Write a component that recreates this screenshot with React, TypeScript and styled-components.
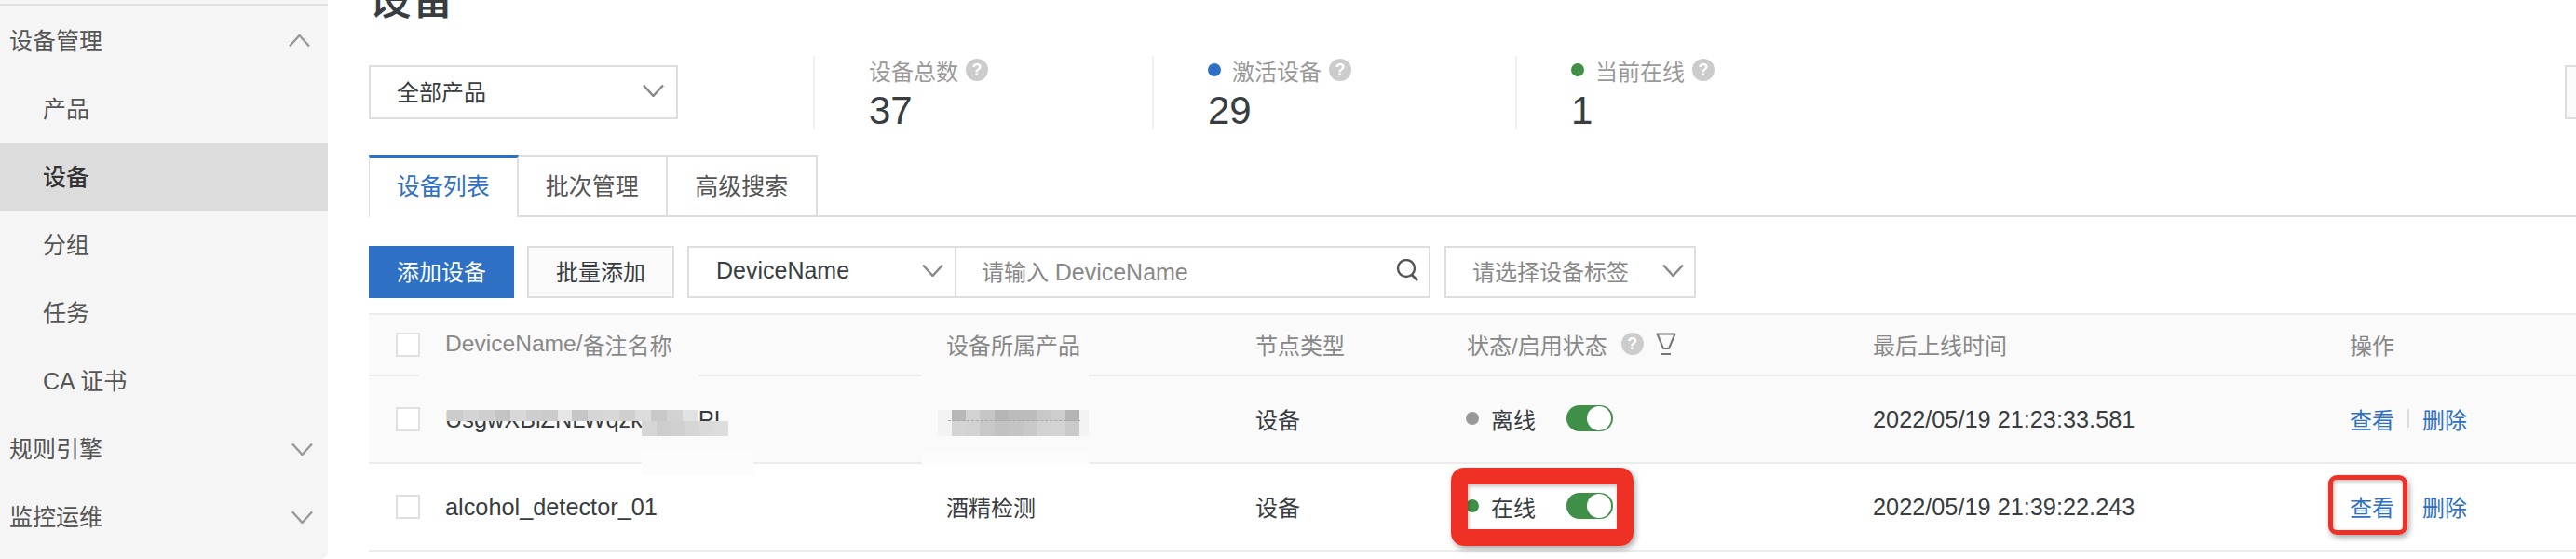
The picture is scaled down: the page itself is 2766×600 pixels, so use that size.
import React from 'react';
import styled, { createGlobalStyle } from 'styled-components';

const GlobalStyle = createGlobalStyle`
  html, body {
    margin: 0;
    padding: 0;
    background: #fff;
  }
  body {
    font-family: "Liberation Sans", "Noto Sans CJK SC", sans-serif;
    color: #373d41;
    overflow: hidden;
  }
`

const Page = styled.div`
  width: 2766px;
  height: 600px;
  display: flex;
  overflow: hidden;
  background: #fff;
`

const Sidebar = styled.nav`
  width: 352px;
  height: 600px;
  flex-shrink: 0;
  box-sizing: border-box;
  padding-top: 8px;
  background: #f5f5f5;
  border-bottom-right-radius: 8px;
  position: relative;

  &::before {
    content: '';
    position: absolute;
    top: 4px;
    left: 0;
    right: 0;
    height: 2px;
    background: #e2e2e2;
  }
`

const MenuRow = styled.div<{ $sub?: boolean; $active?: boolean }>`
  height: 73px;
  box-sizing: border-box;
  padding-left: ${p => (p.$sub ? '46px' : '10px')};
  padding-right: 16px;
  display: flex;
  align-items: center;
  justify-content: space-between;
  font-size: 25px;
  color: ${p => (p.$active ? '#333' : '#555')};
  font-weight: ${p => (p.$active ? 500 : 400)};
  background: ${p => (p.$active ? '#dcdcdc' : 'transparent')};
`

const MenuLabel = styled.span`
  padding-bottom: 6px;
`

const UpSlot = styled.span`
  display: flex;
  margin-right: 3px;
  padding-bottom: 3px;
`

const Main = styled.main`
  flex: 1;
  min-width: 0;
  box-sizing: border-box;
  padding-left: 44px;
  overflow: hidden;
`

const Title = styled.h1`
  margin: -24px 0 38px;
  height: 46px;
  line-height: 46px;
  font-size: 46px;
  font-weight: 500;
  color: #373d41;
`

const StatsRow = styled.section`
  display: flex;
  align-items: center;
  height: 78px;
`

const SelectBox = styled.div<{ $w: number; $muted?: boolean; $h?: number; $pr?: number }>`
  width: ${p => p.$w}px;
  height: ${p => p.$h ?? 58}px;
  flex-shrink: 0;
  box-sizing: border-box;
  border: 2px solid #dedede;
  background: #fff;
  padding: 0 ${p => p.$pr ?? 13}px 4px 28px;
  display: flex;
  align-items: center;
  justify-content: space-between;
  font-size: 24px;
  color: ${p => (p.$muted ? '#888' : '#373d41')};
`

const Stat = styled.div<{ $w: number; $ml?: number }>`
  width: ${p => p.$w}px;
  height: 78px;
  flex-shrink: 0;
  box-sizing: border-box;
  margin-left: ${p => p.$ml ?? 0}px;
  padding-left: 58px;
  border-left: 2px solid #f0f0f0;
`

const StatLabel = styled.div`
  display: flex;
  align-items: center;
  height: 30px;
  font-size: 24px;
  color: #999;
`

const StatValue = styled.div`
  margin-top: 5px;
  font-size: 42px;
  line-height: 48px;
  color: #373d41;
`

const Dot = styled.span<{ $color: string }>`
  width: 14px;
  height: 14px;
  flex-shrink: 0;
  border-radius: 50%;
  background: ${p => p.$color};
  margin-right: 12px;
`

const StatusDot = styled(Dot)`
  margin-left: -1px;
  margin-right: 13px;
`

const Help = styled.span<{ $ml?: number }>`
  width: 24px;
  height: 24px;
  flex-shrink: 0;
  margin-left: ${p => p.$ml ?? 8}px;
  border-radius: 50%;
  background: #ccc;
  color: #fff;
  font-size: 18px;
  font-weight: 700;
  line-height: 24px;
  text-align: center;
`

const EdgeBox = styled.div`
  width: 60px;
  height: 58px;
  flex-shrink: 0;
  box-sizing: border-box;
  margin-left: auto;
  margin-right: -48px;
  border: 2px solid #dedede;
  background: #fafafa;
`

const Tabs = styled.div`
  display: flex;
  height: 67px;
  margin-top: 28px;
  box-sizing: border-box;
  border-bottom: 2px solid #dedede;
`

const Tab = styled.div<{ $active?: boolean }>`
  width: 160.5px;
  height: ${p => (p.$active ? '67px' : '65px')};
  box-sizing: border-box;
  display: flex;
  align-items: center;
  justify-content: center;
  font-size: 25px;
  background: #fff;
  color: ${p => (p.$active ? '#2d70c4' : '#555')};
  border-top: ${p => (p.$active ? '4px solid #2d70c4' : '2px solid #dedede')};
  border-right: 2px solid #dedede;
  border-left: ${p => (p.$active ? '1px solid #dedede' : '0')};
  padding-bottom: ${p => (p.$active ? '7px' : '4px')};
`

const Toolbar = styled.div`
  display: flex;
  height: 56px;
  margin-top: 31px;
`

const Button = styled.div<{ $primary?: boolean; $w: number; $mr: number }>`
  width: ${p => p.$w}px;
  margin-right: ${p => p.$mr}px;
  box-sizing: border-box;
  display: flex;
  align-items: center;
  justify-content: center;
  padding-bottom: 3px;
  font-size: 24px;
  color: ${p => (p.$primary ? '#fff' : '#373d41')};
  background: ${p => (p.$primary ? '#2d70c4' : '#fafafa')};
  border: ${p => (p.$primary ? '0' : '2px solid #dedede')};
`

const SearchGroup = styled.div`
  width: 798px;
  display: flex;
  box-sizing: border-box;
  border: 2px solid #dedede;
  margin-right: 15px;
`

const SearchField = styled.div<{ $w: number }>`
  width: ${p => p.$w}px;
  box-sizing: border-box;
  display: flex;
  align-items: center;
  justify-content: space-between;
  font-size: 24px;
`

const FieldKey = styled(SearchField)`
  padding: 0 12px 4px 29px;
  border-right: 2px solid #dedede;
  color: #373d41;
`

const FieldInput = styled(SearchField)`
  padding: 0 11px 4px 27px;
  color: #888;
`

const Latin = styled.span<{ $size?: number }>`
  font-size: ${p => p.$size ?? 25}px;
`

const Table = styled.div`
  position: relative;
  margin-top: 16px;
  border-top: 2px solid #ececec;
`

const Row = styled.div<{ $h: number; $bg: string; $head?: boolean }>`
  height: ${p => p.$h}px;
  box-sizing: border-box;
  display: grid;
  grid-template-columns: 82px 538px 332px 227px 436px 512px 243px;
  align-items: center;
  background: ${p => p.$bg};
  border-bottom: 2px solid #ececec;
  font-size: 24px;
  color: ${p => (p.$head ? '#888' : '#373d41')};
`

const Check = styled.span`
  display: block;
  width: 26px;
  height: 26px;
  box-sizing: border-box;
  margin-left: 29px;
  border: 2px solid #e0e0e0;
  background: #fff;
`

const Cell = styled.div<{ $latin?: boolean }>`
  display: flex;
  align-items: center;
  white-space: nowrap;
  font-size: ${p => (p.$latin ? '25.3px' : 'inherit')};
  padding-bottom: ${p => (p.$latin ? '0' : '2px')};
`

const Gap = styled.span`
  margin-left: 60px;
`

const Toggle = styled.span`
  width: 50px;
  height: 28px;
  margin-left: 33px;
  box-sizing: border-box;
  padding: 1px 1px 1px 22px;
  border-radius: 14px;
  background: #3f8f48;
`

const Knob = styled.span`
  display: block;
  width: 26px;
  height: 26px;
  border-radius: 50%;
  background: #fff;
`

const LinkText = styled.span`
  color: #2d70c4;
`

const LinkDivider = styled.span<{ $hidden?: boolean }>`
  width: 2px;
  height: 20px;
  margin: 0 14px;
  background: ${p => (p.$hidden ? 'transparent' : '#ddd')};
`

// redaction smudges and mosaic sit on top of the table
const Smudge = styled.div<{ $x: number; $y: number; $w: number; $h: number; $bg: string }>`
  position: absolute;
  left: ${p => p.$x - 396}px;
  top: ${p => p.$y - 338}px;
  width: ${p => p.$w}px;
  height: ${p => p.$h}px;
  background: ${p => p.$bg};
`

const Mosaic = styled.div<{ $x: number; $y: number; $h: number }>`
  position: absolute;
  left: ${p => p.$x - 396}px;
  top: ${p => p.$y - 338}px;
  height: ${p => p.$h}px;
  display: flex;
`

const Tile = styled.span<{ $shade: string; $w: number }>`
  width: ${p => p.$w}px;
  background: ${p => p.$shade};
`

const Seam = styled.div`
  position: absolute;
  left: ${1018 - 396}px;
  top: ${451 - 338}px;
  width: 142px;
  border-top: 1px dashed #a8a8a8;
`

const Callout = styled.div<{ $x: number; $y: number; $w: number; $h: number; $b: number; $r: number }>`
  position: absolute;
  left: ${p => p.$x - 396}px;
  top: ${p => p.$y - 338}px;
  width: ${p => p.$w}px;
  height: ${p => p.$h}px;
  box-sizing: border-box;
  border: ${p => p.$b}px solid #ee3124;
  border-radius: ${p => p.$r}px;
  box-shadow: 2px 3px 6px rgba(0, 0, 0, 0.35), inset 1px 2px 4px rgba(0, 0, 0, 0.25);
`

const Chevron: React.FC<{ up?: boolean; color?: string }> = ({ up, color = '#999' }) => (
  <svg width={23} height={13} viewBox="0 0 23 13" fill="none" style={{ flexShrink: 0 }}>
    <polyline
      points={up ? '1,12.5 11.5,1 22,12.5' : '1,0.5 11.5,12 22,0.5'}
      stroke={color}
      strokeWidth="2.4"
    />
  </svg>
)

const SearchIcon = () => (
  <svg width="24" height="24" viewBox="0 0 24 24" fill="none">
    <circle cx="11" cy="10" r="9" stroke="#555" strokeWidth="2.4" />
    <line x1="17" y1="17" x2="23" y2="23" stroke="#555" strokeWidth="2.6" />
  </svg>
)

const FilterIcon = () => (
  <svg width="22" height="25" viewBox="0 0 22 25" fill="none" style={{ marginLeft: 13 }}>
    <path d="M1.5 1.5H20.5L14 17H8Z" stroke="#777" strokeWidth="2" strokeLinejoin="round" />
    <line x1="6" y1="23" x2="16" y2="23" stroke="#777" strokeWidth="2" />
  </svg>
)

const sideItems = [
  { label: '产品', sub: true },
  { label: '设备', sub: true, active: true },
  { label: '分组', sub: true },
  { label: '任务', sub: true },
  { label: 'CA 证书', sub: true },
]

const nameTiles = ['#ccc', '#d4d4d4', '#cfcfcf', '#c4c4c4', '#d8d8d8', '#cecece', '#cbcbcb', '#e6e6e6', '#c6c6c6', '#d6d6d6', '#d8d8d8', '#cfcfcf', '#dcdcdc', '#c8c8c8', '#d2d2d2', '#e2e2e2']
const nameLower = ['#d6d6d6', '#cdcdcd', '#d0d0d0', '#d6d6d6', '#dadada', '#dddddd']
const productUpper = ['#b8b8b8', '#d2d2d2', '#c6c6c6', '#b6b6b6', '#bcbcbc', '#bcbcbc', '#c8c8c8', '#cecece', '#b4b4b4']
const productLower = ['#d4d4d4', '#d2d2d2', '#c8c8c8', '#c2c2c2', '#c4c4c4', '#c8c8c8', '#d2d2d2', '#d4d4d4', '#cacaca']

const App: React.FC = () => (
  <Page>
    <GlobalStyle />
    <Sidebar>
      <MenuRow>
        <MenuLabel>设备管理</MenuLabel>
        <UpSlot><Chevron up /></UpSlot>
      </MenuRow>
      {sideItems.map(item => (
        <MenuRow key={item.label} $sub={item.sub} $active={item.active}>
          <MenuLabel>{item.label}</MenuLabel>
        </MenuRow>
      ))}
      <MenuRow>
        <MenuLabel>规则引擎</MenuLabel>
        <Chevron />
      </MenuRow>
      <MenuRow>
        <MenuLabel>监控运维</MenuLabel>
        <Chevron />
      </MenuRow>
    </Sidebar>

    <Main>
      <Title>设备</Title>

      <StatsRow>
        <SelectBox $w={332}>
          全部产品
          <Chevron color="#888" />
        </SelectBox>
        <Stat $w={364} $ml={145}>
          <StatLabel>
            设备总数
            <Help>?</Help>
          </StatLabel>
          <StatValue>37</StatValue>
        </Stat>
        <Stat $w={390}>
          <StatLabel>
            <Dot $color="#2d70c4" />
            激活设备
            <Help>?</Help>
          </StatLabel>
          <StatValue>29</StatValue>
        </Stat>
        <Stat $w={400}>
          <StatLabel>
            <Dot $color="#3f8f48" />
            当前在线
            <Help>?</Help>
          </StatLabel>
          <StatValue>1</StatValue>
        </Stat>
        <EdgeBox />
      </StatsRow>

      <Tabs>
        <Tab $active>设备列表</Tab>
        <Tab>批次管理</Tab>
        <Tab>高级搜索</Tab>
      </Tabs>

      <Toolbar>
        <Button $primary $w={156} $mr={14}>添加设备</Button>
        <Button $w={158} $mr={14}>批量添加</Button>
        <SearchGroup>
          <FieldKey $w={287}>
            <Latin>DeviceName</Latin>
            <Chevron color="#888" />
          </FieldKey>
          <FieldInput $w={507}>
            <span>请输入 <Latin>DeviceName</Latin></span>
            <SearchIcon />
          </FieldInput>
        </SearchGroup>
        <SelectBox $w={270} $muted $h={56} $pr={11}>
          请选择设备标签
          <Chevron color="#888" />
        </SelectBox>
      </Toolbar>

      <Table>
        <Row $h={66} $bg="#fafafa" $head>
          <Check />
          <Cell><Latin $size={24.6}>DeviceName/</Latin>备注名称</Cell>
          <Cell>设备所属产品</Cell>
          <Cell>节点类型</Cell>
          <Cell>
            状态/启用状态
            <Help $ml={15}>?</Help>
            <FilterIcon />
          </Cell>
          <Cell>最后上线时间</Cell>
          <Cell>操作</Cell>
        </Row>
        <Row $h={94} $bg="#fafafa">
          <Check />
          <Cell $latin>UsgwXBiZNLWqzk<Gap>PL</Gap></Cell>
          <Cell />
          <Cell>设备</Cell>
          <Cell>
            <StatusDot $color="#999" />
            离线
            <Toggle><Knob /></Toggle>
          </Cell>
          <Cell $latin>2022/05/19 21:23:33.581</Cell>
          <Cell>
            <LinkText>查看</LinkText>
            <LinkDivider />
            <LinkText>删除</LinkText>
          </Cell>
        </Row>
        <Row $h={94} $bg="#fff">
          <Check />
          <Cell $latin>alcohol_detector_01</Cell>
          <Cell>酒精检测</Cell>
          <Cell>设备</Cell>
          <Cell>
            <StatusDot $color="#3f8f48" />
            在线
            <Toggle><Knob /></Toggle>
          </Cell>
          <Cell $latin>2022/05/19 21:39:22.243</Cell>
          <Cell>
            <LinkText>查看</LinkText>
            <LinkDivider $hidden />
            <LinkText>删除</LinkText>
          </Cell>
        </Row>

        <Smudge $x={450} $y={392} $w={300} $h={14} $bg="#fbfbfb" />
        <Smudge $x={689} $y={483} $w={120} $h={27} $bg="#fcfcfc" />
        <Smudge $x={990} $y={400} $w={179} $h={8} $bg="#fbfbfb" />
        <Smudge $x={990} $y={484} $w={179} $h={16} $bg="#fcfcfc" />
        <Smudge $x={1007} $y={440} $w={162} $h={28} $bg="#f3f3f3" />
        <Mosaic $x={480} $y={440} $h={12}>
          {nameTiles.map((shade, i) => <Tile key={i} $shade={shade} $w={i === 7 ? 15 : 17} />)}
        </Mosaic>
        <Mosaic $x={689} $y={452} $h={16}>
          {nameLower.map((shade, i) => <Tile key={i} $shade={shade} $w={15.5} />)}
        </Mosaic>
        <Mosaic $x={1022} $y={440} $h={12}>
          {productUpper.map((shade, i) => <Tile key={i} $shade={shade} $w={15.2} />)}
        </Mosaic>
        <Mosaic $x={1022} $y={452} $h={16}>
          {productLower.map((shade, i) => <Tile key={i} $shade={shade} $w={15.2} />)}
        </Mosaic>
        <Seam />

        <Callout $x={1558} $y={502} $w={196} $h={84} $b={18} $r={14} />
        <Callout $x={2500} $y={510} $w={85} $h={64} $b={5} $r={9} />
      </Table>
    </Main>
  </Page>
)

export default App;
